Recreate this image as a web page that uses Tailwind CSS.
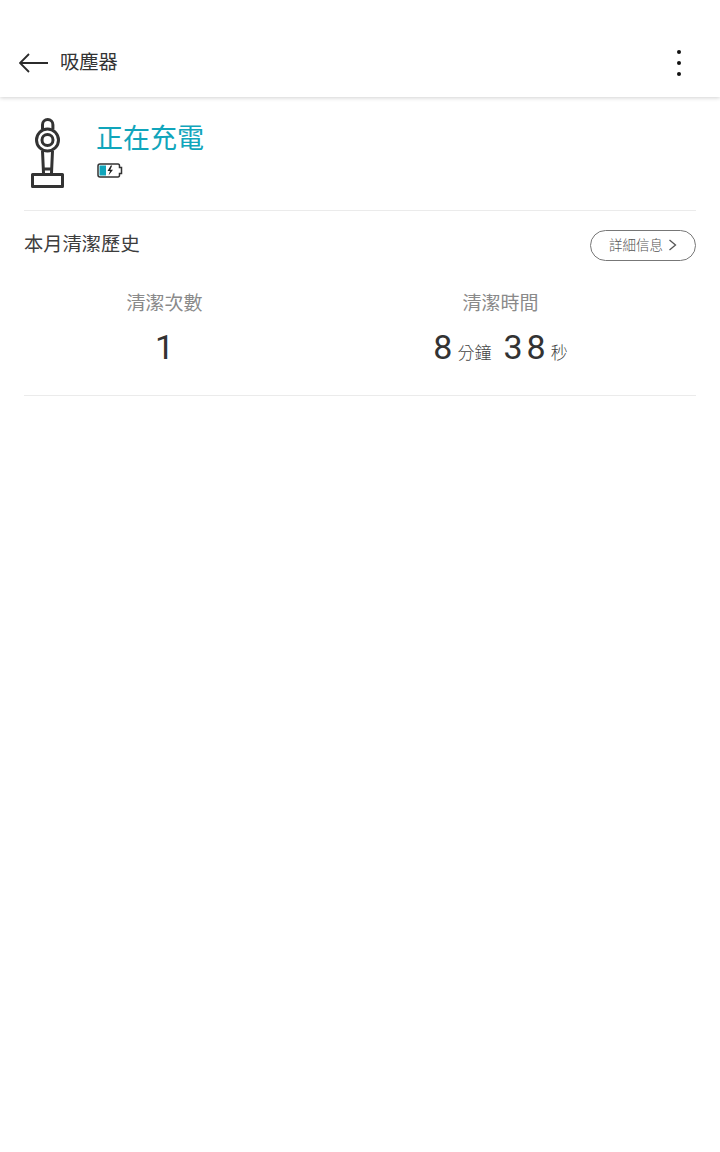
<!DOCTYPE html>
<html lang="zh-Hant">
<head>
    <meta charset="UTF-8">
    <meta name="viewport" content="width=device-width, initial-scale=1.0">
    <title>吸塵器</title>
    <script src="https://cdn.jsdelivr.net/npm/@tailwindcss/browser@4"></script>
</head>
<body class="bg-white h-[1152px] overflow-hidden font-['Roboto','Noto_Sans_CJK_TC',sans-serif]">
    <!-- Header -->
    <header class="h-[97px] pt-[28px] pl-[19px] pr-[39px] flex items-center bg-white shadow-[0_1px_4px_rgba(0,0,0,0.18)]">
        <svg class="w-[30px] h-[20px]" viewBox="0 0 30 20" fill="none" stroke="#2b2b2b" stroke-width="1.8">
            <path d="M10 1 L1 10 L10 19 M1 10 H29"/>
        </svg>
        <h1 class="ml-[11px] text-[19.300px] leading-none font-normal text-[#333]">吸塵器</h1>
        <div class="ml-auto flex flex-col gap-[7px]">
            <span class="w-[4px] h-[4px] rounded-full bg-[#111]"></span>
            <span class="w-[4px] h-[4px] rounded-full bg-[#111]"></span>
            <span class="w-[4px] h-[4px] rounded-full bg-[#111]"></span>
        </div>
    </header>

    <main class="px-[24px]">
        <!-- Status -->
        <section class="h-[114px] flex border-b border-[#ebebeb]">
            <svg class="ml-[7px] mt-[21px] w-[34px] h-[72px]" viewBox="0 0 34 72" fill="none" stroke="#333" stroke-width="3">
                <path d="M11.500 11 V6.700 A5.200 5.200 0 0 1 21.900 6.700 V11"/>
                <circle cx="16.500" cy="22" r="11"/>
                <circle cx="16.500" cy="22" r="5.500"/>
                <path d="M11.500 33 L12.500 55 M21.500 33 L20.500 55 M12 51 H21"/>
                <rect x="1.500" y="56.500" width="30" height="12" stroke-linejoin="round"/>
            </svg>
            <div class="ml-[31px] mt-[25px]">
                <div class="text-[27px] leading-[34px] font-normal text-[#10a5bb]">正在充電</div>
                <svg class="mt-[7px] ml-[1px] w-[26px] h-[15px]" viewBox="0 0 26 15" fill="none">
                    <path d="M3 1 H21 Q22.500 1 22.500 3 V4.500 H24.500 V10.500 H22.500 V12 Q22.500 14 21 14 H3 Q1 14 1 12 V3 Q1 1 3 1 Z" stroke="#333" stroke-width="1.500"/>
                    <rect x="2.500" y="2.500" width="6.500" height="10" fill="#10a5bb"/>
                    <path d="M13.800 2.500 L10.500 8 H13 L11.500 12.500 L16 6.800 H13.300 L15.200 2.500 Z" fill="#222"/>
                </svg>
            </div>
        </section>

        <!-- Monthly history -->
        <section class="h-[185px] border-b border-[#ebebeb]">
            <div class="h-[68px] flex items-center justify-between">
                <h2 class="text-[19.300px] leading-none font-normal text-[#3d3d3d]">本月清潔歷史</h2>
                <button class="w-[106px] h-[31px] rounded-full border border-[#777] flex items-center justify-center gap-[5px] text-[13.500px] font-light text-[#555]">
                    詳細信息
                    <svg class="w-[9px] h-[12px]" viewBox="0 0 9 12" fill="none" stroke="#555" stroke-width="1.300"><path d="M1.500 1 L7.500 6 L1.500 11"/></svg>
                </button>
            </div>
            <div class="grid grid-cols-2 text-center pt-[13px]">
                <div class="w-[281px]">
                    <div class="text-[19px] leading-[24px] font-normal text-[#8a8a8a]">清潔次數</div>
                    <div class="mt-[11px] h-[40px] text-[34px] leading-[40px] font-normal text-[#333]">1</div>
                </div>
                <div class="w-[281px]">
                    <div class="text-[19px] leading-[24px] font-normal text-[#8a8a8a]">清潔時間</div>
                    <div class="mt-[11px] h-[40px] leading-[40px] font-normal text-[#333] flex items-baseline justify-center">
                        <span class="text-[34px]">8</span>
                        <span class="ml-[5px] text-[17px] font-light text-[#444]">分鐘</span>
                        <span class="ml-[12px] text-[34px] tracking-[4px]">38</span>
                        <span class="ml-[1px] text-[17px] font-light text-[#444]">秒</span>
                    </div>
                </div>
            </div>
        </section>
    </main>
</body>
</html>
